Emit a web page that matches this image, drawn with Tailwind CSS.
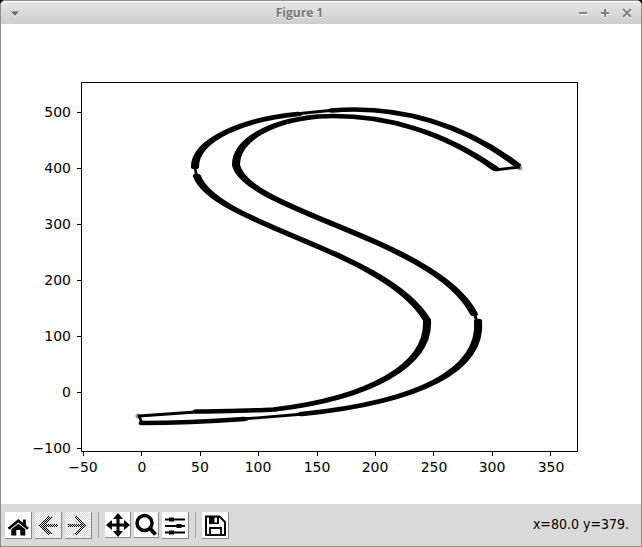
<!DOCTYPE html>
<html lang="en">
<head>
<meta charset="utf-8">
<title>Figure 1</title>
<script src="https://cdn.jsdelivr.net/npm/@tailwindcss/browser@4"></script>
</head>
<body class="bg-black">
<div class="flex min-h-screen flex-col overflow-hidden rounded-t-[5px] border border-[#8d8d8d] bg-white">
  <header class="flex h-[23px] items-center border-t border-white bg-linear-to-b from-[#e6e6e6] to-[#cdcdcd] pr-2 pl-[9px] text-[#777]">
    <button aria-label="Window menu" class="size-3">
      <svg class="size-3" viewBox="0 0 12 12"><path d="M1 5.500h8L5 10z" fill="#fff"/><path d="M1 4.500h8L5 9z" fill="#696969"/></svg>
    </button>
    <h1 class="flex-1 text-center font-['Open_Sans','Noto_Sans',sans-serif] text-[12px] leading-6 font-bold text-shadow-[0_1px_0_#f4f4f4]">Figure 1</h1>
    <div class="flex gap-[10px]">
      <button aria-label="Minimize" class="size-3"><svg class="size-3" viewBox="0 0 12 12"><path d="M2 7h8v1H2z" fill="#fff"/><path d="M2 5h8v2H2z" fill="#808080"/></svg></button>
      <button aria-label="Maximize" class="size-3"><svg class="size-3" viewBox="0 0 12 12" fill="none" stroke-width="2"><path d="M2 7h8M6 3v8" stroke="#fff"/><path d="M2 6h8M6 2v8" stroke="#808080"/></svg></button>
      <button aria-label="Close" class="size-3"><svg class="size-3" viewBox="0 0 12 12" fill="none" stroke-width="2"><path d="M2 3l8 8M10 3l-8 8" stroke="#fff"/><path d="M2 2l8 8M10 2l-8 8" stroke="#808080"/></svg></button>
    </div>
  </header>

  <main class="flex-1">
    <svg class="block h-auto w-full" viewBox="1 24 640 480" role="img" aria-label="Plot of an S-shaped outline">
      <g fill="none" stroke="#000" stroke-width="1">
        <rect x="81.5" y="82.5" width="496" height="369"/>
        <path d="M83.5 452v4M141.5 452v4M200.5 452v4M258.5 452v4M317.5 452v4M375.5 452v4M433.5 452v4M492.5 452v4M550.5 452v4"/>
        <path d="M77 112.5h4M77 168.5h4M77 224.5h4M77 280.5h4M77 336.5h4M77 392.5h4M77 448.5h4"/>
      </g>
      <g font-family="'DejaVu Sans',sans-serif" font-size="14" text-anchor="middle">
        <text x="83" y="472">−50</text><text x="142" y="472">0</text><text x="200" y="472">50</text><text x="258" y="472">100</text><text x="317" y="472">150</text><text x="375" y="472">200</text><text x="434" y="472">250</text><text x="492" y="472">300</text><text x="551" y="472">350</text>
      </g>
      <g font-family="'DejaVu Sans',sans-serif" font-size="14" text-anchor="end">
        <text x="71" y="117">500</text><text x="71" y="173">400</text><text x="71" y="229">300</text><text x="71" y="285">200</text><text x="71" y="341">100</text><text x="71" y="397">0</text><text x="71" y="453">−100</text>
      </g>
      <!-- broad pen: the nib is wider than it is tall -->
      <g transform="scale(1.8 1)" fill="none" stroke="#000" stroke-width="4.500" stroke-linecap="round" stroke-linejoin="round">
        <path d="M184.400 110.500C222.200 105 258.300 125 287.200 165"/>
        <path d="M275 168.500C247.200 133 213.900 113 176.700 116.500C150 121 131.100 140 131.100 165C136.700 211 242.800 240 263.300 314"/>
        <path d="M165.600 114C136.100 119 108.300 139 108.300 167"/>
        <path d="M109.400 176C119.400 225 213.900 250 237.200 320C238.900 365 205.600 398 152.200 409.500C138.900 411 122.200 411 109.400 411.500"/>
        <path d="M265.600 321C267.800 370 233.300 402 167.800 414"/>
        <path d="M135.600 419C120 421 100 423 79.400 423"/>
      </g>
      <path d="M295 114L335 110M495 170L520 167M195 168L197 178M474 312L477 322M304 414L242 419M196 412L139 416L142 423" fill="none" stroke="#000" stroke-width="2.800" stroke-linejoin="round"/>
      <g fill="#000" fill-opacity=".4"><circle cx="520" cy="168" r="2.500"/><circle cx="138" cy="416" r="2.500"/><circle cx="141" cy="423" r="2.500"/></g>
    </svg>
  </main>

  <footer class="flex h-[42px] items-center bg-[#d9d9d9] px-1">
    <div class="flex items-center gap-[3px]" role="toolbar" aria-label="Figure tools">
      <button aria-label="Home" class="size-[27px] border-r border-b border-[#888] bg-white">
        <svg class="size-[26px]" viewBox="0 0 26 26"><path d="M13.300 11.700l7 5.600v6.200h-5v-5.500h-4v5.500h-5v-6.200z"/><path d="M3.500 16.800L13.300 8.800L23 16.800" fill="none" stroke="#000" stroke-width="2.600"/><path d="M18 7.500h2.800v6L18 11.300z"/></svg>
      </button>
      <button aria-label="Back" disabled class="size-[27px] border-r border-b border-[#888] bg-white">
        <svg class="size-[26px]" viewBox="0 0 26 26" shape-rendering="crispEdges">
          <defs>
            <pattern id="dots" width="2" height="2" patternUnits="userSpaceOnUse"><path d="M0 0h1v1H0zM1 1h1v1H1z" fill="#d9d9d9"/></pattern>
            <pattern id="ink" width="2" height="2" patternUnits="userSpaceOnUse"><path d="M0 0h2v2H0z" fill="#d9d9d9"/><path d="M1 0h1v1H1zM0 1h1v1H0z" fill="#000"/></pattern>
          </defs>
          <path d="M0 0h26v26H0z" fill="url(#dots)"/>
          <path d="M4 13.500L13.500 4L17 5.500L11 12H23v3H11L17 21.500L13.500 23z" fill="url(#ink)"/>
        </svg>
      </button>
      <button aria-label="Forward" disabled class="size-[27px] border-r border-b border-[#888] bg-white">
        <svg class="size-[26px]" viewBox="0 0 26 26" shape-rendering="crispEdges">
          <path d="M0 0h26v26H0z" fill="url(#dots)"/>
          <path d="M22 13.500L12.500 4L9 5.500L15 12H3v3H15L9 21.500L12.500 23z" fill="url(#ink)"/>
        </svg>
      </button>
      <div class="mx-[3px] h-[26px] w-px bg-[#a3a3a3]"></div>
      <button aria-label="Pan" class="size-[26px] border-r border-b border-[#888] bg-white">
        <svg class="size-[25px]" viewBox="0 0 25 25"><path d="M13 4v18M4 13h18" stroke="#000" stroke-width="3"/><path d="M13 1l5 6H8zM13 25l5-6H8zM1 13l6-5v10zM25 13l-6-5v10z"/></svg>
      </button>
      <button aria-label="Zoom to rectangle" class="h-[26px] w-[25px] border-r border-b border-[#888] bg-white">
        <svg class="h-[25px] w-6" viewBox="0 0 24 25" fill="none" stroke="#000"><circle cx="10.500" cy="11" r="7.500" stroke-width="3.500"/><path d="M16 16.500l5.500 6" stroke-width="4"/></svg>
      </button>
      <button aria-label="Configure subplots" class="size-[27px] border-r border-b border-[#888] bg-white">
        <svg class="size-[26px]" viewBox="0 0 26 26"><path d="M3 7.500h20M3 14h20M3 20.500h20" stroke="#000" stroke-width="2"/><path d="M7 5.500h5v4H7zM14.500 12h5v4h-5zM7 18.500h5v4H7z"/></svg>
      </button>
      <div class="mx-[3px] h-[26px] w-px bg-[#a3a3a3]"></div>
      <button aria-label="Save" class="size-[27px] border-r border-b border-[#888] bg-white">
        <svg class="size-[26px]" viewBox="0 0 26 26"><path d="M4 4.500h13.500l5.500 5.500v13H4z" fill="none" stroke="#000" stroke-width="2" stroke-linejoin="round"/><path fill-rule="evenodd" d="M7 4h10v8H7zM12.500 5.500v5h2.500v-5z"/><path d="M8 23v-7h11v7" fill="none" stroke="#000" stroke-width="1.800"/></svg>
      </button>
    </div>
    <output class="mr-2 ml-auto pb-0.5 font-['DejaVu_Sans_Condensed','DejaVu_Sans',sans-serif] text-[14px] leading-5">x=80.0 y=379.</output>
  </footer>
</div>
</body>
</html>
